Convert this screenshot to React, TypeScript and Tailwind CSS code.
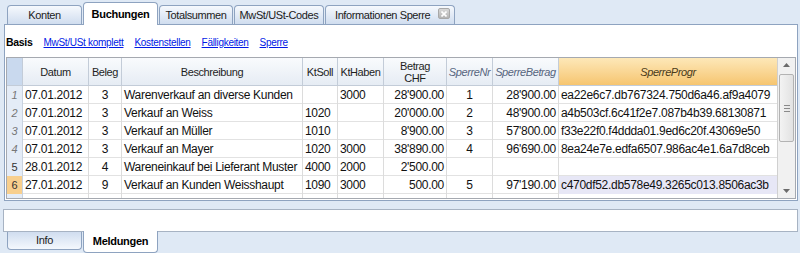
import React from 'react';

type Row = {
  nr: string;
  locked: boolean;
  datum: string;
  beleg: string;
  text: string;
  soll: string;
  haben: string;
  betrag: string;
  sperreNr: string;
  sperreBetrag: string;
  progr: string;
};

const rows: Row[] = [
  { nr: '1', locked: true, datum: '07.01.2012', beleg: '3', text: 'Warenverkauf an diverse Kunden', soll: '', haben: '3000', betrag: "28'900.00", sperreNr: '1', sperreBetrag: "28'900.00", progr: 'ea22e6c7.db767324.750d6a46.af9a4079' },
  { nr: '2', locked: true, datum: '07.01.2012', beleg: '3', text: 'Verkauf an Weiss', soll: '1020', haben: '', betrag: "20'000.00", sperreNr: '2', sperreBetrag: "48'900.00", progr: 'a4b503cf.6c41f2e7.087b4b39.68130871' },
  { nr: '3', locked: true, datum: '07.01.2012', beleg: '3', text: 'Verkauf an Müller', soll: '1010', haben: '', betrag: "8'900.00", sperreNr: '3', sperreBetrag: "57'800.00", progr: 'f33e22f0.f4ddda01.9ed6c20f.43069e50' },
  { nr: '4', locked: true, datum: '07.01.2012', beleg: '3', text: 'Verkauf an Mayer', soll: '1020', haben: '3000', betrag: "38'890.00", sperreNr: '4', sperreBetrag: "96'690.00", progr: '8ea24e7e.edfa6507.986ac4e1.6a7d8ceb' },
  { nr: '5', locked: false, datum: '28.01.2012', beleg: '4', text: 'Wareneinkauf bei Lieferant Muster', soll: '4000', haben: '2000', betrag: "2'500.00", sperreNr: '', sperreBetrag: '', progr: '' },
  { nr: '6', locked: false, datum: '27.01.2012', beleg: '9', text: 'Verkauf an Kunden Weisshaupt', soll: '1090', haben: '3000', betrag: '500.00', sperreNr: '5', sperreBetrag: "97'190.00", progr: 'c470df52.db578e49.3265c013.8506ac3b' },
];

const cols = 'grid grid-cols-[16px_66px_33px_181px_35px_46px_63px_46px_66px_218px]';
const cell = 'border-r border-[#dcdcdc] px-[2px] overflow-hidden whitespace-nowrap';

function TopTab({ label, width, active, close }: { label: string; width: string; active?: boolean; close?: boolean }) {
  if (active) {
    return (
      <div className={`${width} h-[23px] -mb-px relative z-10 flex items-center justify-center bg-white border border-b-0 border-[#8ea3c0] rounded-t-[4px] text-[11px] font-bold tracking-[-0.3px] text-black`}>
        {label}
      </div>
    );
  }
  return (
    <div
      className={`${width} h-[19px] relative flex items-center ${
        close ? 'justify-start pl-[9px]' : 'justify-center'
      } bg-gradient-to-b from-[#f6f9fd] to-[#d0ddef] border border-b-0 border-[#8ea3c0] rounded-t-[4px] text-[11px] tracking-[-0.4px] text-[#1b1b1b]`}
    >
      {label}
      {close && (
        <span className="absolute right-[4px] top-[2px] w-[12px] h-[11px] rounded-[2px] bg-gradient-to-b from-[#d8d8d8] to-[#b4b4b4] border border-[#a8a8a8] flex items-center justify-center">
          <svg width="6" height="6" viewBox="0 0 6 6">
            <path d="M0.5 0.5 L5.5 5.5 M5.5 0.5 L0.5 5.5" stroke="#fff" strokeWidth="1.6" />
          </svg>
        </span>
      )}
    </div>
  );
}

function Scrollbar() {
  return (
    <div className="w-[18px] bg-[#f1f1f1] border-l border-[#d0d0d0] flex flex-col items-center">
      <div className="h-[14px] flex items-center justify-center">
        <svg width="7" height="4" viewBox="0 0 7 4"><path d="M0 4 L3.5 0 L7 4 Z" fill="#6b6b6b" /></svg>
      </div>
      <div className="mt-[2px] w-[15px] h-[68px] rounded-[2px] border border-[#b3b3b3] bg-gradient-to-r from-[#f3f3f3] to-[#e2e2e2] flex flex-col items-center justify-center gap-[2px]">
        <div className="w-[6px] h-px bg-[#8a8a8a]" />
        <div className="w-[6px] h-px bg-[#8a8a8a]" />
        <div className="w-[6px] h-px bg-[#8a8a8a]" />
      </div>
      <div className="flex-1" />
      <div className="h-[14px] flex items-center justify-center">
        <svg width="7" height="4" viewBox="0 0 7 4"><path d="M0 0 L3.5 4 L7 0 Z" fill="#6b6b6b" /></svg>
      </div>
    </div>
  );
}

export default function App() {
  return (
    <div className="w-[800px] h-[253px] overflow-hidden bg-[#dfe9f5] font-['Liberation_Sans',Arial,sans-serif] text-black">
      {/* upper tabs */}
      <div className="h-[24px] flex items-end gap-[1px] pl-[7px]">
        <TopTab label="Konten" width="w-[75px]" />
        <TopTab label="Buchungen" width="w-[75px]" active />
        <TopTab label="Totalsummen" width="w-[74px]" />
        <TopTab label="MwSt/USt-Codes" width="w-[90px]" />
        <TopTab label="Informationen Sperre" width="w-[130px]" close />
      </div>

      {/* main panel */}
      <div className="ml-[4px] w-[794px] h-[177px] bg-white border border-[#8ea3c0] px-px">
        <div className="h-[32px] flex items-center gap-[11px] pl-0 pt-[3px] text-[10px] tracking-[-0.3px]">
          <span className="font-bold text-[10.5px]">Basis</span>
          <span className="text-[#0019e6] underline">MwSt/USt komplett</span>
          <span className="text-[#0019e6] underline">Kostenstellen</span>
          <span className="text-[#0019e6] underline">Fälligkeiten</span>
          <span className="text-[#0019e6] underline">Sperre</span>
        </div>

        <div className="h-[142px] border border-[#a5a9b0] flex overflow-hidden">
          <div className="flex-1 flex flex-col">
            {/* header */}
            <div className={`${cols} h-[28px] border-b border-[#c3ccd8] bg-gradient-to-b from-[#f9fbfd] to-[#e6ecf4] text-[11px] tracking-[-0.4px] text-[#1e1e1e] leading-[12px]`}>
              <div className="bg-[#c9d9ee] border-r border-[#c3ccd8]" />
              <div className="border-r border-[#c3ccd8] flex items-center justify-center">Datum</div>
              <div className="border-r border-[#c3ccd8] flex items-center justify-center">Beleg</div>
              <div className="border-r border-[#c3ccd8] flex items-center justify-center">Beschreibung</div>
              <div className="border-r border-[#c3ccd8] flex items-center justify-center">KtSoll</div>
              <div className="border-r border-[#c3ccd8] flex items-center justify-center">KtHaben</div>
              <div className="border-r border-[#c3ccd8] flex flex-col items-center justify-center">
                <span>Betrag</span>
                <span>CHF</span>
              </div>
              <div className="border-r border-[#c3ccd8] flex items-center justify-center italic text-[#56657e]">SperreNr</div>
              <div className="border-r border-[#c3ccd8] flex items-center justify-center italic text-[#56657e]">SperreBetrag</div>
              <div className="bg-gradient-to-b from-[#fde8b8] to-[#f6c56f] flex items-center justify-center italic text-[#4a3a1a]">SperreProgr</div>
            </div>

            {/* rows */}
            {rows.map((r) => (
              <div key={r.nr} className={`${cols} h-[18px] border-b border-[#e2e2e2] text-[12px] tracking-[-0.3px] leading-[18px] text-[#111]`}>
                <div
                  className={`border-r border-[#c9d3e0] text-center text-[11px] ${
                    r.nr === '6' ? 'bg-[#f8cf8d]' : 'bg-[#e4ecf7]'
                  } ${r.locked ? 'italic text-[#777]' : 'text-[#333]'}`}
                >
                  {r.nr}
                </div>
                <div className={cell}>{r.datum}</div>
                <div className={`${cell} text-center`}>{r.beleg}</div>
                <div className={cell}>{r.text}</div>
                <div className={cell}>{r.soll}</div>
                <div className={cell}>{r.haben}</div>
                <div className={`${cell} text-right`}>{r.betrag}</div>
                <div className={`${cell} text-center`}>{r.sperreNr}</div>
                <div className={`${cell} text-right`}>{r.sperreBetrag}</div>
                <div className={`px-[2px] overflow-hidden whitespace-nowrap ${r.nr === '6' ? 'bg-[#e7e7f6]' : ''}`}>{r.progr}</div>
              </div>
            ))}
            <div className={`${cols} flex-1`}>
              <div className="bg-[#e4ecf7] border-r border-[#c9d3e0]" />
              <div className={cell} />
              <div className={cell} />
              <div className={cell} />
              <div className={cell} />
              <div className={cell} />
              <div className={cell} />
              <div className={cell} />
              <div className={cell} />
              <div />
            </div>
          </div>
          <Scrollbar />
        </div>
      </div>

      {/* message box */}
      <div className="mt-[8px] ml-[3px] w-[795px] h-[23px] bg-white border border-[#a7b3c3]" />

      {/* lower tabs */}
      <div className="flex items-start gap-[1px] pl-[7px]">
        <div className="w-[75px] h-[18px] flex items-center justify-center bg-gradient-to-b from-[#d0ddef] to-[#f4f8fd] border border-t-0 border-[#8ea3c0] rounded-b-[4px] text-[11px] tracking-[-0.3px] text-[#1b1b1b]">
          Info
        </div>
        <div className="w-[75px] h-[22px] -mt-px relative z-10 flex items-center justify-center bg-white border border-t-0 border-[#8ea3c0] rounded-b-[4px] text-[11px] font-bold tracking-[-0.3px]">
          Meldungen
        </div>
      </div>
    </div>
  );
}
